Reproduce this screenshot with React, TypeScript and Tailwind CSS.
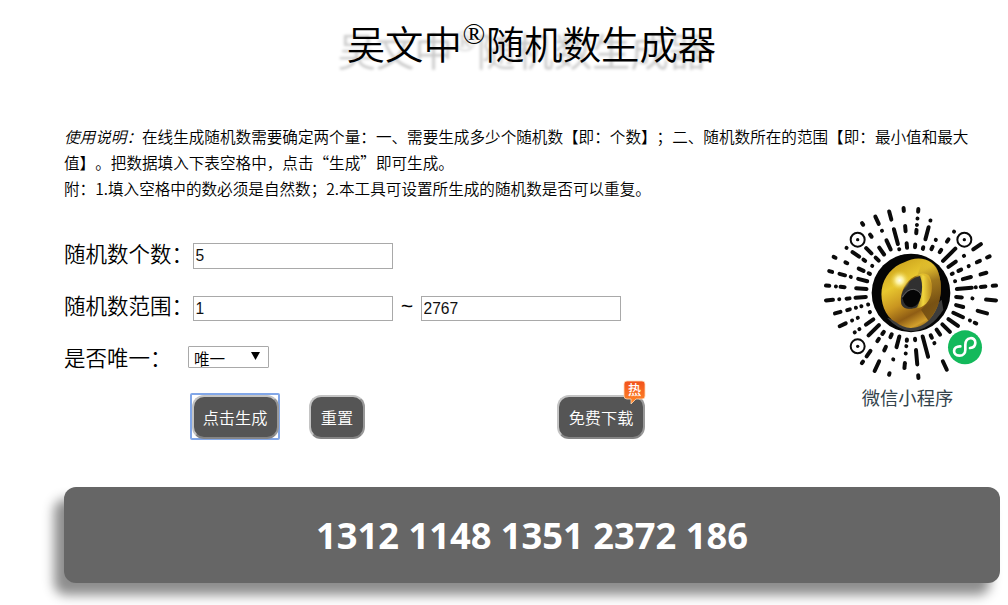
import React, { useState } from 'react';

// Spokes of the mini program code, clockwise from the top in 10 degree steps.
// Each pair is the inner and outer radius of one dash; equal values are dots.
const spokes: number[][][] = [
  [[138, 146], [180, 190], [205, 205], [224, 224], [245, 253]],
  [[137, 142], [167, 204], [225, 225]],
  [[145, 153], [176, 176]],
  [[150, 158], [188, 196], [225, 225]],
  [[136, 188]],
  [[137, 164], [194, 194], [228, 256]],
  [[135, 138], [157, 166], [191, 191], [218, 228], [252, 260]],
  [[137, 137], [161, 186], [216, 234]],
  [[138, 183], [195, 195], [210, 224], [246, 256]],
  [[136, 153], [185, 185], [226, 256]],
  [[140, 162], [207, 236]],
  [[140, 172], [195, 195], [211, 216]],
  [[137, 172]],
  [[133, 165]],
  [[134, 152]],
  [[140, 148], [166, 166], [226, 254]],
  [[135, 198]],
  [[138, 142], [172, 215], [248, 256]],
  [[140, 144], [160, 160], [182, 182], [211, 226]],
  [[135, 168], [206, 206], [249, 254]],
  [[137, 146], [178, 190], [226, 258]],
  [[142, 150], [168, 176], [212, 232], [251, 257]],
  [[136, 180]],
  [[138, 165], [189, 189], [206, 206]],
  [[136, 136], [176, 176], [195, 195], [216, 236]],
  [[133, 133], [154, 154], [171, 171], [190, 198], [219, 236]],
  [[136, 167], [185, 194], [216, 216], [235, 256]],
  [[134, 165], [200, 212], [226, 226], [246, 256]],
  [[136, 164], [187, 187], [205, 222], [245, 254]],
  [[136, 140], [157, 173], [211, 217], [250, 256]],
  [[142, 142], [168, 174], [190, 214], [236, 236]],
  [[137, 150], [168, 190]],
  [[141, 166], [206, 214], [250, 256]],
  [[144, 174], [206, 206], [229, 253]],
  [[136, 136], [152, 198], [228, 253]],
  [[136, 150], [186, 202], [247, 256]],
];

const MiniProgramCode: React.FC = () => (
  <svg className="block h-[180px] w-[180px]" viewBox="-270 -270 540 540">
    <defs>
      <linearGradient id="gold" gradientUnits="userSpaceOnUse" x1="-60" y1="-90" x2="45" y2="105">
        <stop offset="0" stopColor="#c9a01c" />
        <stop offset="0.3" stopColor="#e8c72f" />
        <stop offset="0.55" stopColor="#c99520" />
        <stop offset="0.75" stopColor="#8f5d14" />
        <stop offset="0.9" stopColor="#d3a02c" />
        <stop offset="1" stopColor="#6b430c" />
      </linearGradient>
      <linearGradient id="rim" gradientUnits="userSpaceOnUse" x1="30" y1="-100" x2="80" y2="70">
        <stop offset="0" stopColor="#e4bf35" stopOpacity="0" />
        <stop offset="0.4" stopColor="#8d681b" />
        <stop offset="1" stopColor="#5d3c0d" />
      </linearGradient>
      <linearGradient id="goldInner" x1="0" y1="0" x2="1" y2="0">
        <stop offset="0.45" stopColor="#8d6513" />
        <stop offset="0.72" stopColor="#f2d63e" />
        <stop offset="1" stopColor="#b98b1e" />
      </linearGradient>
      <radialGradient id="shine">
        <stop offset="0" stopColor="#fffef0" />
        <stop offset="0.35" stopColor="#fff6a8" stopOpacity="0.9" />
        <stop offset="1" stopColor="#e6c52e" stopOpacity="0" />
      </radialGradient>
    </defs>
    <g stroke="#0b0b0b" strokeWidth="12" strokeLinecap="round">
      {spokes.map((dashes, i) => (
        <g key={i} transform={`rotate(${5 + i * 10})`}>
          {dashes.map(([from, to]) => (
            <line key={from} x1="0" x2="0" y1={-from} y2={-to - 0.1} />
          ))}
        </g>
      ))}
    </g>
    {[[-160, -160], [160, -160], [-160, 160]].map(([x, y]) => (
      <g key={`${x}${y}`} transform={`translate(${x} ${y})`}>
        <circle r="21" fill="#fff" stroke="#0b0b0b" strokeWidth="6" />
        <circle r="5" fill="#0b0b0b" />
      </g>
    ))}
    <circle r="118" fill="#050505" />
    <path d="M-72 74 Q-40 110 0 115 Q60 110 97 50 L92 20 L0 95Z" fill="#3c3c3c" />
    <path
      d="M-20 -92 C20 -114 72 -105 84 -55 C98 -5 85 50 52 83 C20 112 -20 110 -45 88 C-80 70 -92 25 -88 -10 C-82 -50 -55 -80 -20 -92Z"
      fill="url(#gold)"
    />
    <path d="M35 -103 C68 -98 82 -75 85 -50 C98 -5 85 50 52 83 L30 50 C62 25 70 -25 55 -50 C48 -62 30 -60 20 -54Z" fill="url(#rim)" opacity="0.75" />
    <path d="M-30 30 C-35 0 -15 -38 12 -50 C40 -62 60 -45 62 -15 C63 15 48 38 22 45 C-5 52 -25 48 -30 30Z" fill="url(#goldInner)" />
    <path d="M-29 32 C-35 0 -12 -42 27 -51 C38 -25 34 10 18 43 C-2 51 -24 49 -29 32Z" fill="#303030" />
    <path d="M-25 16 Q-12 -10 7 -10 Q28 -8 30 9 Q22 41 2 43 Q-21 43 -25 16Z" fill="#050505" />
    <path d="M-26 12 Q-12 -12 8 -11 Q25 -8 31 8" fill="none" stroke="#777" strokeWidth="2" />
    <circle cx="-34" cy="-38" r="31" fill="url(#shine)" />
    <circle cx="162" cy="163" r="58" fill="#fff" />
    <circle cx="162" cy="163" r="51" fill="#13b95b" />
    <path
      d="M148 160 C124 159 123 188 145 188 C157 188 163 180 163 170 L163 156 C163 130 193 130 193 149 C193 159 186 164 177 165"
      fill="none"
      stroke="#fff"
      strokeWidth="8"
      strokeLinecap="round"
    />
  </svg>
);

const HotBadge: React.FC = () => (
  <span className="absolute -top-[17px] -right-[3px] h-[25px] w-[23px]">
    <svg className="absolute inset-0" width="23" height="25" viewBox="0 0 23 25">
      <defs>
        <linearGradient id="hot" x1="0" y1="0" x2="0" y2="1">
          <stop offset="0" stopColor="#f2511b" />
          <stop offset="1" stopColor="#ff8a2a" />
        </linearGradient>
      </defs>
      <path
        d="M4 1 H19 Q22 1 22 4 V16 Q22 19 19 19 H13 L8 24 V19 H4 Q1 19 1 16 V4 Q1 1 4 1Z"
        fill="url(#hot)"
        stroke="#ffd9b8"
        strokeWidth="0.8"
      />
      <path d="M6 16 l1.5 -1 1.5 1 1.5 -1 1.5 1 1.5 -1 1.5 1 1.5 -1 1.5 1" fill="none" stroke="#ffe9d8" strokeWidth="0.8" />
    </svg>
    <span className="absolute inset-x-0 top-px text-center text-[13px] leading-[15px] font-medium text-white">热</span>
  </span>
);

const inputClass =
  "block w-[200px] border border-[#a9a9a9] bg-white px-[1.5px] font-['Liberation_Sans',sans-serif] text-[15.6px] text-[#111] outline-none";
const buttonClass =
  'relative h-11 rounded-xl border-2 border-t-[#c4c4c4] border-r-[#999] border-b-[#858585] border-l-[#c4c4c4] bg-[#555] text-[16.2px] leading-[38px] font-[350] whitespace-nowrap text-white';

const App: React.FC = () => {
  const [count, setCount] = useState('5');
  const [min, setMin] = useState('1');
  const [max, setMax] = useState('2767');
  const [numbers] = useState([1312, 1148, 1351, 2372, 186]);

  return (
    <main className="h-[605px] w-[1008px] overflow-hidden bg-white pr-2 pl-16 font-['Noto_Sans_CJK_SC',sans-serif] text-black [text-spacing-trim:space-all]">
      <h1 className="flex h-[123px] justify-center pt-[14px] pr-px text-[38.4px] leading-[56px] font-[350] whitespace-nowrap [text-shadow:-9px_7px_3px_rgba(0,0,0,0.22)]">
        吴文中
        <span className="-mt-2 w-6 text-center font-['Liberation_Serif',serif] text-[30px] font-normal">®</span>
        随机数生成器
      </h1>

      <div className="h-20 text-[15.6px] leading-[26px] font-[350] whitespace-nowrap">
        <p><em>使用说明：</em>在线生成随机数需要确定两个量：一、需要生成多少个随机数【即：个数】；二、随机数所在的范围【即：最小值和最大</p>
        <p>值】。把数据填入下表空格中，点击“生成”即可生成。</p>
        <p>附：1.填入空格中的数必须是自然数；2.本工具可设置所生成的随机数是否可以重复。</p>
      </div>

      <div className="flex h-[284px] justify-between">
        <form className="pt-[25px] text-[21.5px] font-[350]" onSubmit={(e) => e.preventDefault()}>
          <div className="flex h-[52px]">
            <label className="w-[129px] leading-[50px]">随机数个数：</label>
            <input className={`${inputClass} mt-[15px] h-[26px]`} value={count} onChange={(e) => setCount(e.target.value)} />
          </div>
          <div className="flex h-[52px]">
            <label className="w-[129px] leading-[50px]">随机数范围：</label>
            <input className={`${inputClass} mt-4 h-[25px]`} value={min} onChange={(e) => setMin(e.target.value)} />
            <span className="w-7 text-center font-['Open_Sans',sans-serif] text-[22px] leading-[50px] font-normal">~</span>
            <input className={`${inputClass} mt-4 h-[25px]`} value={max} onChange={(e) => setMax(e.target.value)} />
          </div>
          <div className="flex h-[52px]">
            <label className="w-[124px] leading-[49px]">是否唯一：</label>
            <div className="relative mt-[14px] h-[22px] w-[81px]">
              <select className="block h-full w-full appearance-none rounded-[1px] border border-[#a9a9a9] bg-white pt-[2px] pl-[5px] text-[15.6px] leading-[18px] font-[350] outline-none">
                <option>唯一</option>
                <option>不唯一</option>
              </select>
              <span className="pointer-events-none absolute top-[6px] right-[9px] h-2 w-[9px] bg-black [clip-path:polygon(0_0,100%_0,50%_100%)]" />
            </div>
          </div>
          <div className="flex pt-[9px] pl-[126px]">
            <div className="flex h-[47px] w-[90px] items-center justify-center rounded-[2px] border-2 border-[#82a7e8]">
              <button className={`${buttonClass} w-[87px] shrink-0`}>点击生成</button>
            </div>
            <button className={`${buttonClass} mt-[2px] ml-[29px] w-14`} type="reset">重置</button>
            <button className={`${buttonClass} mt-[2px] ml-[192px] w-[88px]`} type="button">
              免费下载
              <HotBadge />
            </button>
          </div>
        </form>

        <aside className="-mr-[3px] flex w-[184px] flex-col items-center">
          <MiniProgramCode />
          <p className="-ml-[7px] text-[18.3px] leading-[28px] text-[#33434c]">微信小程序</p>
        </aside>
      </div>

      <div className="h-24 rounded-[12px] bg-[#666] text-center font-['Open_Sans',sans-serif] text-[36.3px] leading-24 font-bold text-white shadow-[-10px_12px_12px_rgba(0,0,0,0.45)]">
        {numbers.join(' ')}
      </div>
    </main>
  );
};

export default App;
